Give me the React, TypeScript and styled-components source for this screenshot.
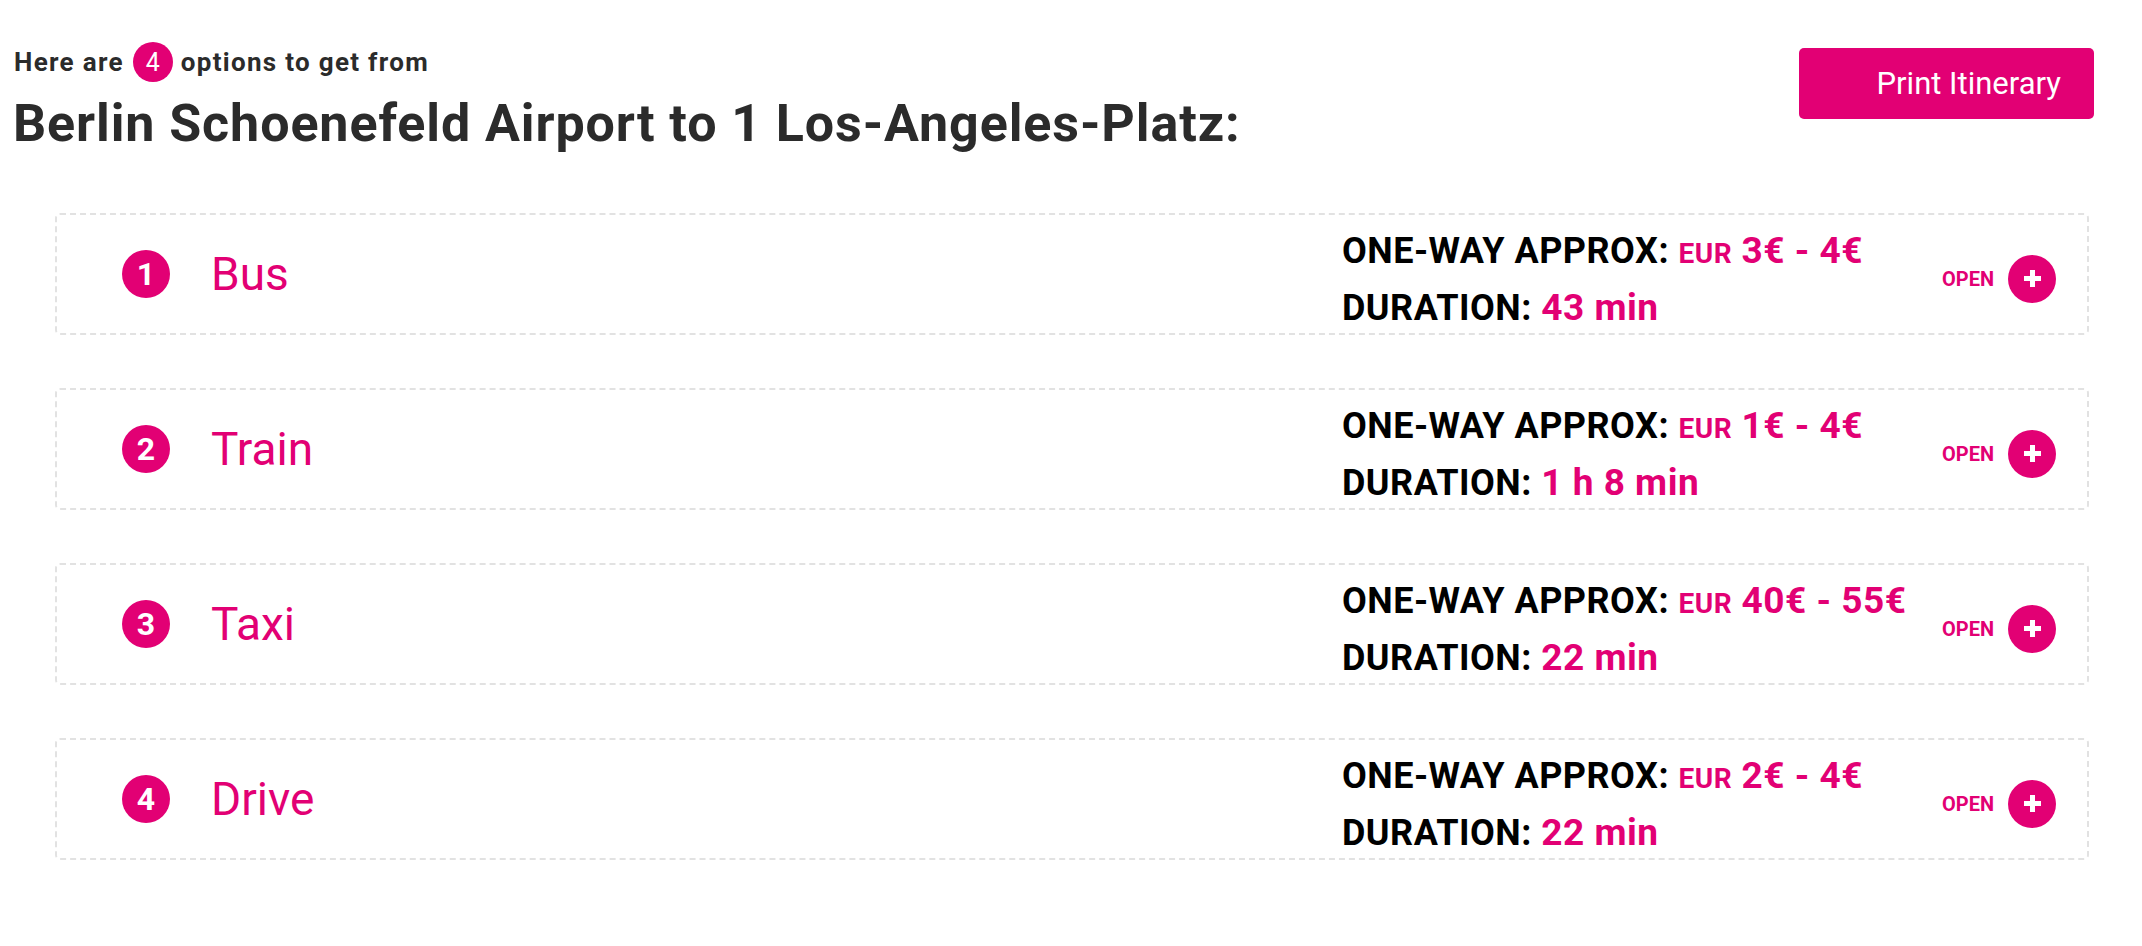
import React from 'react';
import styled, { createGlobalStyle } from 'styled-components';

const MAGENTA = '#e20074';

const GlobalStyle = createGlobalStyle`
  html, body {
    margin: 0;
    padding: 0;
    background: #ffffff;
  }
  body {
    font-family: Roboto, 'Liberation Sans', Arial, sans-serif;
    -webkit-font-smoothing: antialiased;
  }
`;

interface IOption {
  name: string;
  currency: string;
  price: string;
  duration: string;
}

const options: IOption[] = [
  { name: 'Bus', currency: 'EUR', price: '3€ - 4€', duration: '43 min' },
  { name: 'Train', currency: 'EUR', price: '1€ - 4€', duration: '1 h 8 min' },
  { name: 'Taxi', currency: 'EUR', price: '40€ - 55€', duration: '22 min' },
  { name: 'Drive', currency: 'EUR', price: '2€ - 4€', duration: '22 min' },
];

const PlusIcon = () => (
  <svg width="17" height="17" viewBox="0 0 17 17" fill="#ffffff">
    <rect x="6" y="0" width="5" height="17" />
    <rect x="0" y="6" width="17" height="5" />
  </svg>
);

const App = () => {
  return (
    <>
      <GlobalStyle />
      <Page>
        <Header>
          <Heading>
            <SubTitle>
              Here are<CountBadge>{options.length}</CountBadge>options to get from
            </SubTitle>
            <Title>Berlin Schoenefeld Airport to 1 Los-Angeles-Platz:</Title>
          </Heading>
          <PrintButton type="button">Print Itinerary</PrintButton>
        </Header>

        <OptionList>
          {options.map((option, index) => (
            <OptionCard key={option.name}>
              <OptionName>
                <NumberBadge>{index + 1}</NumberBadge>
                <NameText>{option.name}</NameText>
              </OptionName>
              <Stats>
                <StatLine>
                  ONE-WAY APPROX: <Currency>{option.currency}</Currency>{' '}
                  <Value>{option.price}</Value>
                </StatLine>
                <StatLine>
                  DURATION: <Value>{option.duration}</Value>
                </StatLine>
              </Stats>
              <OpenToggle>
                <OpenLabel>OPEN</OpenLabel>
                <PlusButton>
                  <PlusIcon />
                </PlusButton>
              </OpenToggle>
            </OptionCard>
          ))}
        </OptionList>
      </Page>
    </>
  );
};

const Page = styled.div`
  width: 100%;
  min-height: 946px;
  box-sizing: border-box;
`;

const Header = styled.div`
  display: flex;
  justify-content: space-between;
  align-items: flex-start;
  padding: 42px 48px 0 13px;
`;

const Heading = styled.div`
  display: flex;
  flex-direction: column;
`;

const SubTitle = styled.div`
  display: flex;
  align-items: center;
  height: 40px;
  font-size: 26px;
  letter-spacing: 1.3px;
  font-weight: 700;
  color: #2b2b2b;
  padding-left: 1px;
`;

const CountBadge = styled.span`
  display: inline-flex;
  align-items: center;
  justify-content: center;
  width: 40px;
  height: 40px;
  margin: 0 8px 0 9px;
  border-radius: 50%;
  background: ${MAGENTA};
  color: #ffffff;
  font-size: 25px;
  font-weight: 400;
  letter-spacing: 0;
`;

const Title = styled.h1`
  margin: 12px 0 0;
  font-size: 52px;
  line-height: 60px;
  letter-spacing: 0.9px;
  font-weight: 700;
  color: #2b2b2b;
`;

const PrintButton = styled.button`
  margin-top: 6px;
  width: 295px;
  height: 71px;
  padding: 0 33px 0 0;
  border: none;
  border-radius: 5px;
  background: ${MAGENTA};
  color: #ffffff;
  font-family: Roboto, 'Liberation Sans', Arial, sans-serif;
  font-size: 31px;
  font-weight: 400;
  text-align: right;
  cursor: pointer;
`;

const OptionList = styled.div`
  display: flex;
  flex-direction: column;
  gap: 53px;
  margin-top: 59px;
  padding: 0 53px 0 55px;
`;

const OptionCard = styled.div`
  display: flex;
  align-items: center;
  height: 122px;
  box-sizing: border-box;
  padding: 0 31px 0 65px;
  border: 2px dashed #e2e2e2;
  border-radius: 5px;
`;

const OptionName = styled.div`
  flex: 1;
  display: flex;
  align-items: center;
`;

const NumberBadge = styled.span`
  display: inline-flex;
  align-items: center;
  justify-content: center;
  width: 48px;
  height: 48px;
  border-radius: 50%;
  background: ${MAGENTA};
  color: #ffffff;
  font-size: 32px;
  font-weight: 700;
`;

const NameText = styled.span`
  margin-left: 41px;
  font-size: 46px;
  font-weight: 400;
  color: ${MAGENTA};
`;

const Stats = styled.div`
  align-self: flex-start;
  width: 600px;
  padding-top: 9px;
`;

const StatLine = styled.div`
  font-size: 36px;
  line-height: 54px;
  letter-spacing: 0.5px;
  font-weight: 700;
  color: #000000;
  white-space: nowrap;
`;

const Currency = styled.span`
  font-size: 28px;
  color: ${MAGENTA};
`;

const Value = styled.span`
  font-size: 37px;
  color: ${MAGENTA};
`;

const OpenToggle = styled.div`
  display: flex;
  align-items: center;
  gap: 14px;
  margin-top: 9px;
  cursor: pointer;
`;

const OpenLabel = styled.span`
  font-size: 20px;
  font-weight: 700;
  color: ${MAGENTA};
`;

const PlusButton = styled.span`
  display: inline-flex;
  align-items: center;
  justify-content: center;
  width: 48px;
  height: 48px;
  border-radius: 50%;
  background: ${MAGENTA};
`;

export default App;
